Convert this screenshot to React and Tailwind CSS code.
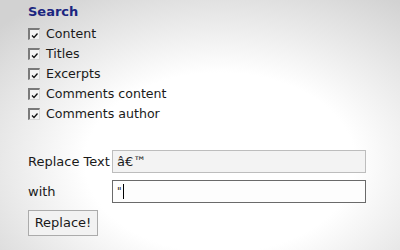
import React from "react";

function Check() {
  return (
    <span className="relative w-[12px] h-[12px] bg-[#f4f4f4] border-t-2 border-l-2 border-t-[#7a7a7a] border-l-[#7a7a7a] border-r border-b border-r-[#d8d8d8] border-b-[#d8d8d8] flex items-center justify-center shrink-0">
      <svg width="8" height="7" viewBox="0 0 8 7" className="absolute left-[1px] top-[2px]">
        <path d="M1 3.5 L3 5.5 L6.5 1.5" fill="none" stroke="#111" strokeWidth="1.3" />
      </svg>
    </span>
  );
}

export default function App() {
  const items = ["Content", "Titles", "Excerpts", "Comments content", "Comments author"];
  return (
    <div
      className="w-[400px] h-[250px] overflow-hidden bg-[radial-gradient(ellipse_75%_80%_at_55%_65%,#ffffff_45%,#d2d2d2_100%)] text-[#1a1a1a] text-[13px] pl-[28px] pt-[2px]"
      style={{ fontFamily: '"DejaVu Sans", Verdana, sans-serif' }}
    >
      <div className="font-bold text-[#1b2680] h-[20px] leading-[20px]">Search</div>
      <div className="flex flex-col mt-[2px]">
        {items.map((t) => (
          <div key={t} className="flex items-center gap-[6px] h-[20px]">
            <Check />
            <span className="leading-[20px] text-[12.6px]">{t}</span>
          </div>
        ))}
      </div>
      <div className="mt-[26px] flex items-center h-[23px]">
        <span className="w-[84px]">Replace Text</span>
        <div className="w-[254px] h-[23px] border border-[#bdbdbd] bg-[#f3f3f3] px-[4px] flex items-center">â€™</div>
      </div>
      <div className="mt-[7px] flex items-center h-[23px]">
        <span className="w-[84px]">with</span>
        <div className="w-[254px] h-[23px] border border-[#6a6a6a] bg-[#fdfdfd] px-[4px] flex items-center">
          <span className="text-[10px]">"</span>
          <span className="w-[1px] h-[15px] bg-black ml-[1px]"></span>
        </div>
      </div>
      <button className="mt-[7px] w-[70px] h-[26px] border border-[#ababab] bg-[#f2f2f2] text-[13px] text-[#1a1a1a]" style={{ fontFamily: '"DejaVu Sans", Verdana, sans-serif' }}>
        Replace!
      </button>
    </div>
  );
}
